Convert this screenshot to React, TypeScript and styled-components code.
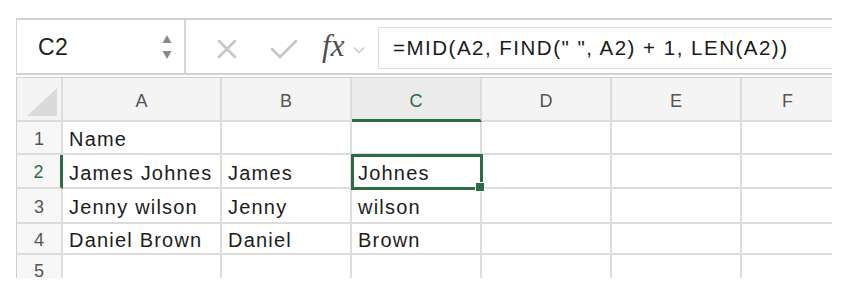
import React from "react";
import styled, { createGlobalStyle } from "styled-components";

const GlobalStyle = createGlobalStyle`
  body {
    margin: 0;
    background: #ffffff;
    font-family: "Liberation Sans", Arial, sans-serif;
  }
`;

const GREEN = "#2d6b43";
const GRID = "#dcdcdc";

const columns = ["A", "B", "C", "D", "E", "F"];
const colWidths = [159, 130, 130, 130, 130, 91];

const rows = [
  { n: 1, h: 33, cells: ["Name", "", "", "", "", ""] },
  { n: 2, h: 34, cells: ["James Johnes", "James", "Johnes", "", "", ""] },
  { n: 3, h: 35, cells: ["Jenny wilson", "Jenny", "wilson", "", "", ""] },
  { n: 4, h: 31, cells: ["Daniel Brown", "Daniel", "Brown", "", "", ""] },
  { n: 5, h: 31, cells: ["", "", "", "", "", ""] },
];

const selected = { row: 2, col: 2 };

const App = () => {
  return (
    <>
      <GlobalStyle />
      <Page>
        <FormulaBar>
          <NameBox>
            <NameText>C2</NameText>
            <Spinner>
              <svg width="10" height="26" viewBox="0 0 10 26">
                <path d="M5 1 L9.5 9 L0.5 9 Z" fill="#8a8a8a" />
                <path d="M5 25 L9.5 17 L0.5 17 Z" fill="#8a8a8a" />
              </svg>
            </Spinner>
          </NameBox>
          <Actions>
            <IconSlot>
              <svg width="22" height="20" viewBox="0 0 22 20">
                <path d="M3 2 L19 18 M19 2 L3 18" stroke="#c6c6c6" strokeWidth="2.6" strokeLinecap="round" />
              </svg>
            </IconSlot>
            <IconSlot>
              <svg width="28" height="20" viewBox="0 0 28 20">
                <path d="M2 10 L10 18 L26 2" stroke="#c6c6c6" strokeWidth="2.6" fill="none" strokeLinecap="round" strokeLinejoin="round" />
              </svg>
            </IconSlot>
            <Fx>
              f<span>x</span>
            </Fx>
            <Chevron>
              <svg width="12" height="8" viewBox="0 0 12 8">
                <path d="M1 1.5 L6 6.5 L11 1.5" stroke="#c8c8c8" strokeWidth="1.4" fill="none" />
              </svg>
            </Chevron>
          </Actions>
          <FormulaInput>=MID(A2, FIND(" ", A2) + 1, LEN(A2))</FormulaInput>
        </FormulaBar>

        <Sheet>
          <Grid $widths={colWidths} $heights={rows.map((r) => r.h)}>
            <Corner>
              <svg width="30" height="28" viewBox="0 0 30 28">
                <path d="M30 0 L30 28 L0 28 Z" fill="#dadada" />
              </svg>
            </Corner>
            {columns.map((c, i) => (
              <ColHeader key={c} $active={i === selected.col} $last={i === columns.length - 1}>
                {c}
              </ColHeader>
            ))}
            {rows.map((r) => (
              <React.Fragment key={r.n}>
                <RowHeader $active={r.n === selected.row}>{r.n}</RowHeader>
                {r.cells.map((v, i) => (
                  <Cell
                    key={i}
                    $selected={r.n === selected.row && i === selected.col}
                    $last={i === columns.length - 1}
                  >
                    {v}
                  </Cell>
                ))}
              </React.Fragment>
            ))}
          </Grid>
        </Sheet>
      </Page>
    </>
  );
};

export default App;

const Page = styled.div`
  width: 816px;
  padding: 18px 0 0 16px;
`;

const FormulaBar = styled.div`
  display: flex;
  height: 53px;
  border-top: 2px solid #d2d2d2;
  border-bottom: 2px solid #d2d2d2;
  box-sizing: content-box;
`;

const NameBox = styled.div`
  width: 170px;
  display: flex;
  align-items: center;
  justify-content: space-between;
  border-left: 1px solid #d6d6d6;
  border-right: 2px solid #d6d6d6;
  padding: 0 12px 0 21px;
  box-sizing: border-box;
`;

const NameText = styled.div`
  font-size: 23px;
  letter-spacing: 0.4px;
  color: #1f1f1f;
  margin-top: 2px;
`;

const Spinner = styled.div`
  display: flex;
  align-items: center;
`;

const Actions = styled.div`
  width: 192px;
  display: flex;
  align-items: center;
  padding-left: 30px;
  box-sizing: border-box;
`;

const IconSlot = styled.div`
  display: flex;
  align-items: center;
  margin-right: 32px;
  margin-top: 4px;
`;

const Fx = styled.div`
  font-family: "Liberation Serif", "Times New Roman", serif;
  font-style: italic;
  font-size: 31px;
  color: #4d4d4d;
  margin-left: -8px;
  margin-top: -2px;
  span {
    margin-left: 0px;
  }
`;

const Chevron = styled.div`
  display: flex;
  margin-left: 9px;
  margin-top: 6px;
`;

const FormulaInput = styled.div`
  flex: 1;
  margin-top: 7px;
  height: 40px;
  border-top: 1px solid #dcdcdc;
  border-bottom: 1px solid #dcdcdc;
  border-left: 1px solid #dcdcdc;
  display: flex;
  align-items: center;
  padding-left: 14px;
  font-size: 20.5px;
  letter-spacing: 1.5px;
  color: #1a1a1a;
  white-space: nowrap;
  overflow: hidden;
`;

const Sheet = styled.div`
  margin-top: 2px;
  height: 200px;
  overflow: hidden;
  border-top: 1px solid #d0d0d0;
`;

const Grid = styled.div<{ $widths: number[]; $heights: number[] }>`
  display: grid;
  grid-template-columns: 46px ${({ $widths }) => $widths.map((w) => `${w}px`).join(" ")};
  grid-template-rows: 44px ${({ $heights }) => $heights.map((h) => `${h}px`).join(" ")};
  border-left: 1px solid #cfcfcf;
`;

const Corner = styled.div`
  background: #f4f4f4;
  border-right: 2px solid ${GRID};
  border-bottom: 2px solid ${GRID};
  display: flex;
  align-items: flex-end;
  justify-content: flex-end;
  padding: 0 4px 4px 0;
`;

const ColHeader = styled.div<{ $active: boolean; $last: boolean }>`
  background: ${({ $active }) => ($active ? "#ebebeb" : "#f4f4f4")};
  border-right: ${({ $last }) => ($last ? "none" : `2px solid ${GRID}`)};
  border-bottom: ${({ $active }) => ($active ? `3px solid ${GREEN}` : `2px solid ${GRID}`)};
  display: flex;
  align-items: center;
  justify-content: center;
  padding-top: ${({ $active }) => ($active ? "5px" : "4px")};
  font-size: 18px;
  color: ${({ $active }) => ($active ? GREEN : "#555555")};
`;

const RowHeader = styled.div<{ $active: boolean }>`
  background: #f7f7f7;
  border-right: ${({ $active }) => ($active ? `3px solid ${GREEN}` : `2px solid ${GRID}`)};
  border-bottom: 2px solid ${GRID};
  display: flex;
  align-items: center;
  justify-content: center;
  padding-top: 3px;
  font-size: 18px;
  color: ${({ $active }) => ($active ? GREEN : "#555555")};
`;

const Cell = styled.div<{ $selected: boolean; $last: boolean }>`
  position: relative;
  border-right: ${({ $last }) => ($last ? "none" : `2px solid ${GRID}`)};
  border-bottom: 2px solid ${GRID};
  display: flex;
  align-items: center;
  padding: 4px 0 0 6px;
  font-size: 20px;
  letter-spacing: 1.2px;
  color: #1c1c1c;
  white-space: nowrap;
  outline: ${({ $selected }) => ($selected ? `3px solid ${GREEN}` : "none")};
  outline-offset: -2px;
  z-index: ${({ $selected }) => ($selected ? 1 : 0)};

  &::after {
    content: "";
    display: ${({ $selected }) => ($selected ? "block" : "none")};
    position: absolute;
    right: -5px;
    bottom: -5px;
    width: 8px;
    height: 8px;
    background: ${GREEN};
    border: 1px solid #ffffff;
  }
`;
